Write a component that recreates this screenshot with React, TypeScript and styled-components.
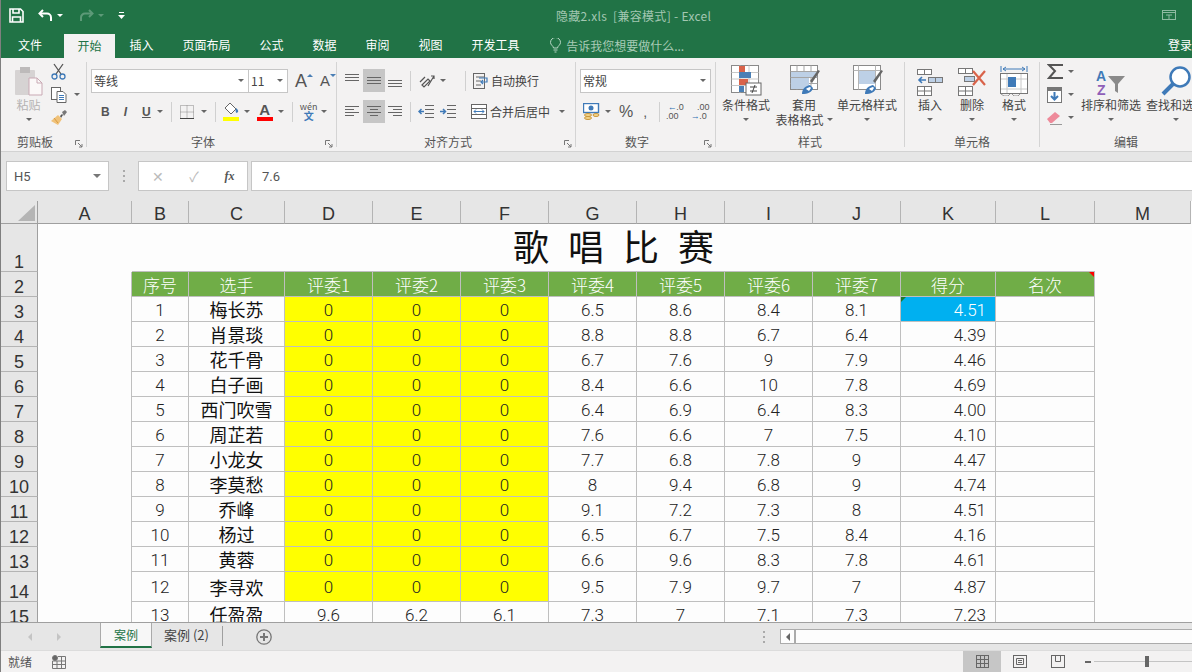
import React from 'react';
import styled, { createGlobalStyle } from 'styled-components';

const CJK = '"Noto Sans CJK SC", "Liberation Sans", sans-serif';
const NUM = 'Roboto, "Noto Sans CJK SC", sans-serif';

const GlobalStyle = createGlobalStyle`
  html, body { margin: 0; padding: 0; background: #e6e6e6; }
  body { font-family: ${CJK}; overflow: hidden; }
  * { box-sizing: border-box; }
`;

const Window = styled.div`
  width: 1192px;
  height: 672px;
  display: flex;
  flex-direction: column;
  overflow: hidden;
  border-left: 1px solid #7f7f7f;
`;

/* title bar */
const TitleBar = styled.div`
  height: 30px;
  flex: none;
  background: #217346;
  display: flex;
  align-items: center;
`;
const QuickButton = styled.div<{ $ml: number }>`
  margin-left: ${(p) => p.$ml}px;
  display: flex;
  align-items: center;
`;
const WhiteCaret = styled.span<{ $dim?: boolean }>`
  margin-left: 4px;
  border-left: 3px solid transparent;
  border-right: 3px solid transparent;
  border-top: 3px solid ${(p) => (p.$dim ? '#5d9a78' : '#fff')};
`;
const DocTitle = styled.div`
  margin-left: 431px;
  font-size: 12px;
  color: #a3c7b2;
  white-space: pre;
  letter-spacing: 0.3px;
`;
const RestoreButton = styled.div`
  margin-left: auto;
  margin-right: 16px;
  margin-top: -4px;
`;

/* tabs */
const TabBar = styled.div`
  height: 28px;
  flex: none;
  background: #217346;
  display: flex;
  align-items: stretch;
`;
const FileTab = styled.div`
  width: 63px;
  padding-left: 17px;
  font-size: 12px;
  line-height: 30px;
  color: #fff;
`;
const Tab = styled.div<{ $active?: boolean }>`
  padding: 0 ${(p) => (p.$active ? 13.5 : 14.5)}px;
  font-size: 12px;
  color: ${(p) => (p.$active ? '#217346' : '#fff')};
  background: ${(p) => (p.$active ? '#f3f2f2' : 'transparent')};
  margin-top: ${(p) => (p.$active ? 4 : 0)}px;
  line-height: ${(p) => (p.$active ? 23 : 30)}px;
`;
const TellMe = styled.div`
  margin-left: 16px;
  display: flex;
  align-items: center;
  gap: 5px;
  font-size: 12px;
  color: #a8cbb6;
  padding-top: 2px;
`;
const Login = styled.div`
  margin-left: auto;
  font-size: 12px;
  line-height: 30px;
  color: #fff;
  white-space: nowrap;
`;

/* ribbon */
const Ribbon = styled.div`
  height: 94px;
  flex: none;
  background: #f3f2f2;
  border-bottom: 1px solid #d2d2d2;
  display: flex;
  padding-top: 4px;
  overflow: hidden;
`;
const Group = styled.div<{ $w: number; $last?: boolean }>`
  width: ${(p) => p.$w}px;
  flex: none;
  height: 85px;
  display: flex;
  flex-direction: column;
  border-right: ${(p) => (p.$last ? 'none' : '1px solid #d4d4d4')};
`;
const GroupBody = styled.div<{ $pl: number }>`
  flex: 1;
  min-height: 0;
  display: flex;
  padding-left: ${(p) => p.$pl}px;
`;
const GroupTitle = styled.div<{ $tl: number }>`
  height: 14px;
  margin-bottom: -2px;
  display: flex;
  align-items: center;
  justify-content: space-between;
  font-size: 12px;
  line-height: 14px;
  color: #555;
  padding: 0 3px 0 ${(p) => p.$tl}px;
`;
const Launcher = styled.svg`
  margin-top: 3px;
`;
const StackRows = styled.div`
  display: flex;
  flex-direction: column;
  padding-top: 7px;
  gap: 8px;
`;
const ToolRow = styled.div`
  height: 23px;
  display: flex;
  align-items: center;
`;
const Item = styled.div<{ $ml?: number }>`
  margin-left: ${(p) => p.$ml ?? 0}px;
  display: flex;
  align-items: center;
  flex: none;
`;
const Caret = styled.span<{ $ml?: number }>`
  flex: none;
  margin-left: ${(p) => p.$ml ?? 0}px;
  border-left: 3px solid transparent;
  border-right: 3px solid transparent;
  border-top: 3px solid #666;
`;
const RowSep = styled.span<{ $ml: number }>`
  flex: none;
  width: 1px;
  height: 20px;
  margin-left: ${(p) => p.$ml}px;
  background: #d0d0d0;
`;
const Select = styled.div<{ $w: number; $ml?: number }>`
  width: ${(p) => p.$w}px;
  height: 24px;
  margin-left: ${(p) => p.$ml ?? 0}px;
  background: #fff;
  border: 1px solid #c6c6c6;
  display: flex;
  align-items: center;
  justify-content: space-between;
  padding: 0 4px 0 2px;
  font-size: 12px;
  color: #444;
`;
const ToggleCell = styled.div<{ $on?: boolean; $ml?: number }>`
  width: 22px;
  height: 23px;
  flex: none;
  margin-left: ${(p) => p.$ml ?? 0}px;
  background: ${(p) => (p.$on ? '#c6c6c6' : 'transparent')};
  display: flex;
  align-items: center;
  justify-content: center;
`;
const StyleLetter = styled.span<{ $i?: boolean; $u?: boolean; $ml?: number }>`
  margin-left: ${(p) => p.$ml ?? 0}px;
  font-family: "Liberation Sans", sans-serif;
  font-size: 12px;
  font-weight: 700;
  font-style: ${(p) => (p.$i ? 'italic' : 'normal')};
  text-decoration: ${(p) => (p.$u ? 'underline' : 'none')};
  color: #555;
`;
const GrowA = styled.span<{ $size: number; $ml: number }>`
  margin-left: ${(p) => p.$ml}px;
  font-family: "Liberation Sans", sans-serif;
  font-size: ${(p) => p.$size}px;
  line-height: 18px;
  color: #555;
`;
const TinyArrow = styled.span<{ $down?: boolean }>`
  align-self: flex-start;
  margin-top: 5px;
  border-left: 3px solid transparent;
  border-right: 3px solid transparent;
  ${(p) => (p.$down ? 'border-top: 3px solid #4a7fb5;' : 'border-bottom: 3px solid #4a7fb5;')}
`;
const ColorA = styled.span`
  display: flex;
  flex-direction: column;
  align-items: center;
  width: 16px;
  font-family: "Liberation Sans", sans-serif;
  font-size: 15px;
  font-weight: 700;
  line-height: 13px;
  color: #555;
`;
const ColorBar = styled.span<{ $c: string }>`
  width: 16px;
  height: 4px;
  margin-top: 1px;
  background: ${(p) => p.$c};
`;
const Wen = styled.span`
  display: flex;
  flex-direction: column;
  align-items: center;
  width: 16px;
  font-size: 9px;
  line-height: 9px;
  color: #555;
`;
const WenBlue = styled.span`
  color: #3f7ab8;
  font-size: 10px;
  line-height: 10px;
  font-weight: 700;
`;
const ActionLabel = styled.span<{ $ml: number }>`
  margin-left: ${(p) => p.$ml}px;
  font-size: 12px;
  color: #444;
  white-space: nowrap;
`;
const Percent = styled.span<{ $ml: number; $size: number }>`
  margin-left: ${(p) => p.$ml}px;
  font-family: "Liberation Sans", sans-serif;
  font-size: ${(p) => p.$size}px;
  color: #555;
`;
const DecimalIcon = styled.div<{ $ml: number }>`
  margin-left: ${(p) => p.$ml}px;
  width: 16px;
  font-family: "Liberation Sans", sans-serif;
  font-size: 9px;
  line-height: 9px;
  color: #555;
  display: grid;
  grid-template-columns: 8px 8px;
  justify-items: center;
`;
const Blue = styled.span`
  color: #2f6fb0;
  font-weight: 700;
`;
const LargeButton = styled.div<{ $w: number; $ml?: number }>`
  width: ${(p) => p.$w}px;
  margin-left: ${(p) => p.$ml ?? 0}px;
  flex: none;
  display: flex;
  flex-direction: column;
  align-items: center;
  padding-top: 4px;
  font-size: 12px;
  line-height: 15px;
  color: #444;
  white-space: nowrap;
`;
const LargeIcon = styled.div<{ $dx?: number }>`
  height: 30px;
  margin-bottom: 1px;
  margin-left: ${(p) => p.$dx ?? 0}px;
  display: flex;
  align-items: flex-end;
`;
const LargeCaretLine = styled.div`
  height: 15px;
  display: flex;
  align-items: center;
  justify-content: center;
  gap: 3px;
`;
const MutedLabel = styled.span`
  color: #b5b3b3;
`;
const SmallColumn = styled.div<{ $ml: number }>`
  margin-left: ${(p) => p.$ml}px;
  display: flex;
  flex-direction: column;
  gap: 6px;
  padding-top: 1px;
`;
const SmallRow = styled.div`
  height: 17px;
  display: flex;
  align-items: center;
`;

/* formula bar */
const FormulaBar = styled.div`
  height: 49px;
  flex: none;
  background: #e6e6e6;
  padding: 9px 0 10px 5px;
  display: flex;
`;
const NameBox = styled.div`
  width: 103px;
  background: #fff;
  border: 1px solid #c6c6c6;
  display: flex;
  align-items: center;
  justify-content: space-between;
  padding: 0 7px;
  font-family: ${NUM};
  font-size: 13px;
  color: #555;
`;
const DarkCaret = styled.span`
  border-left: 4px solid transparent;
  border-right: 4px solid transparent;
  border-top: 4px solid #777;
`;
const GripDots = styled.span`
  flex: none;
  width: 2px;
  height: 12px;
  background: repeating-linear-gradient(to bottom, #aaa 0 2px, transparent 2px 5px);
`;
const BarGrip = styled.div`
  width: 29px;
  display: flex;
  align-items: center;
  justify-content: center;
`;
const FormulaButtons = styled.div`
  width: 110px;
  background: #fff;
  border: 1px solid #c6c6c6;
  display: grid;
  grid-template-columns: 37px 36px 35px;
  align-items: center;
  justify-items: center;
  font-size: 14px;
  color: #bbb;
`;
const FxLabel = styled.span`
  font-family: "Liberation Serif", serif;
  font-style: italic;
  font-weight: 700;
  font-size: 12px;
  color: #555;
`;
const FormulaInput = styled.div`
  flex: 1;
  margin-left: 3px;
  background: #fff;
  border: 1px solid #c6c6c6;
  border-right: none;
  display: flex;
  align-items: center;
  padding-left: 10px;
  font-family: ${NUM};
  font-size: 13px;
  color: #555;
`;

/* sheet */
const SheetArea = styled.div`
  flex: 1;
  min-height: 0;
  overflow: hidden;
  background: #fdfdfd;
`;
const SheetGrid = styled.div`
  display: grid;
  grid-template-columns: 37px 94px 57px 96px 88px 88px 88px 88px 88px 88px 88px 95px 99px 96px;
  grid-template-rows: 23px 48px repeat(12, 25px) 30px 25px;
  font-family: ${NUM};
  color: #222;
`;
const Corner = styled.div`
  background: #e6e6e6;
  border-right: 1px solid #9f9f9f;
  border-bottom: 1px solid #9f9f9f;
  display: flex;
  align-items: flex-end;
  justify-content: flex-end;
  padding: 0 2px 2px 0;
`;
const ColHead = styled.div`
  background: #e6e6e6;
  border-right: 1px solid #b4b4b4;
  border-bottom: 1px solid #9f9f9f;
  font-size: 18px;
  font-family: "Liberation Sans", sans-serif;
  line-height: 26px;
  text-align: center;
  color: #333;
`;
const RowHead = styled.div`
  background: #e6e6e6;
  border-right: 1px solid #9f9f9f;
  border-bottom: 1px solid #b4b4b4;
  font-size: 18px;
  font-family: "Liberation Sans", sans-serif;
  display: flex;
  align-items: flex-end;
  justify-content: center;
  line-height: 18px;
  color: #333;
`;
const Blank = styled.div<{ $edge?: boolean }>`
  border-right: ${(p) => (p.$edge ? '1px solid #bfbfbf' : 'none')};
`;
const TitleCell = styled.div`
  grid-column: span 11;
  border-bottom: 1px solid #bfbfbf;
  font-family: ${CJK};
  font-size: 36px;
  line-height: 42px;
  text-align: center;
  word-spacing: 11px;
  color: #111;
`;
const Cell = styled.div<{ $head?: boolean; $fill?: string; $right?: boolean }>`
  position: relative;
  background: ${(p) => (p.$head ? '#70ad47' : p.$fill ?? 'transparent')};
  color: ${(p) => (p.$head || p.$fill === '#00b0f0' ? '#fff' : '#222')};
  border-right: 1px solid #bfbfbf;
  border-bottom: 1px solid #bfbfbf;
  display: flex;
  align-items: center;
  justify-content: ${(p) => (p.$right ? 'flex-end' : 'center')};
  padding-right: ${(p) => (p.$right ? 9 : 0)}px;
  padding-top: ${(p) => (p.$head ? 0 : 1)}px;
  font-size: 17px;
  font-family: ${(p) => (p.$head ? CJK : NUM)};
  font-weight: 300;
  white-space: nowrap;
`;
const NameText = styled.span`
  margin-top: -1px;
  font-family: ${CJK};
  font-size: 18px;
  font-weight: 400;
  color: #111;
`;
const CornerMark = styled.span<{ $c: string; $side: 'left' | 'right' }>`
  position: absolute;
  top: 0;
  ${(p) => p.$side}: 0;
  width: 0;
  height: 0;
  border-top: 5px solid ${(p) => p.$c};
  ${(p) => (p.$side === 'left' ? 'border-right: 5px solid transparent;' : 'border-left: 5px solid transparent;')}
`;

/* sheet tabs */
const SheetTabs = styled.div`
  height: 28px;
  flex: none;
  background: #e6e6e6;
  border-top: 1px solid #9f9f9f;
  display: flex;
`;
const NavArrow = styled.span<{ $ml: number; $right?: boolean }>`
  align-self: center;
  margin-left: ${(p) => p.$ml}px;
  border-top: 4px solid transparent;
  border-bottom: 4px solid transparent;
  ${(p) => (p.$right ? 'border-left: 4px solid #c4c4c4;' : 'border-right: 4px solid #c4c4c4;')}
`;
const ActiveSheet = styled.div`
  margin-left: 39px;
  width: 52px;
  height: 25px;
  background: #f7f7f7;
  border-left: 1px solid #aaa;
  border-right: 1px solid #aaa;
  border-bottom: 2px solid #217346;
  color: #217346;
  font-size: 12px;
  line-height: 23px;
  text-align: center;
`;
const OtherSheet = styled.div`
  margin-left: 12px;
  width: 46px;
  font-size: 13px;
  line-height: 24px;
  color: #444;
  white-space: nowrap;
`;
const TabSep = styled.span`
  margin: 3px 0 3px 12px;
  width: 1px;
  height: 20px;
  background: #9f9f9f;
`;
const AddSheet = styled.div`
  margin-left: 33px;
  align-self: center;
  display: flex;
`;
const ScrollGrip = styled.div`
  margin-left: 484px;
  width: 16px;
  display: flex;
  align-items: center;
  justify-content: center;
`;
const ScrollBar = styled.div`
  margin-left: 8px;
  margin-top: 6px;
  flex: 1;
  height: 15px;
  background: #fdfdfd;
  border: 1px solid #ababab;
  border-right: none;
  display: flex;
`;
const ScrollButton = styled.div`
  width: 15px;
  border-right: 2px solid #ababab;
  display: flex;
  align-items: center;
  justify-content: center;
`;
const ScrollTri = styled.span`
  border-top: 4px solid transparent;
  border-bottom: 4px solid transparent;
  border-right: 4px solid #666;
`;

/* status bar */
const StatusBar = styled.div`
  height: 22px;
  flex: none;
  background: #f3f2f2;
  display: flex;
  align-items: center;
  border-top: 1px solid #dcdcdc;
  font-size: 12px;
  color: #555;
`;
const StatusText = styled.span`
  margin-left: 7px;
  margin-top: -1px;
`;
const ViewButton = styled.div<{ $on?: boolean; $ml: number }>`
  width: 38px;
  height: 21px;
  margin-left: ${(p) => p.$ml}px;
  background: ${(p) => (p.$on ? '#c6c6c6' : 'transparent')};
  display: flex;
  align-items: center;
  justify-content: center;
`;
const ZoomMinus = styled.span`
  margin-left: 8px;
  width: 6px;
  height: 2px;
  background: #666;
`;
const ZoomTrack = styled.div`
  margin-left: 3px;
  flex: 1;
  height: 1px;
  background: #c4c4c4;
  display: flex;
  align-items: center;
  padding-left: 51px;
`;
const ZoomKnob = styled.span`
  flex: none;
  width: 4px;
  height: 11px;
  background: #666;
`;

const LauncherIcon = () => (
  <Launcher width="8" height="8" viewBox="0 0 8 8" fill="none" stroke="#777">
    <path d="M.5 5V.5H5" />
    <path d="M3 3l4 4M7 4v3H4" />
  </Launcher>
);

const Title = ({ children, tl }: { children: React.ReactNode; tl: number }) => (
  <GroupTitle $tl={tl}>
    <span>{children}</span>
    <LauncherIcon />
  </GroupTitle>
);

const PlainTitle = ({ children, tl }: { children: React.ReactNode; tl: number }) => (
  <GroupTitle $tl={tl}>
    <span>{children}</span>
  </GroupTitle>
);

const SaveIcon = () => (
  <svg width="15" height="15" viewBox="0 0 15 15" fill="none" stroke="#fff" strokeWidth="1.6">
    <path d="M1 1h10.5L14 3.5V14H1z" />
    <path d="M4 1v4h6V1M3.5 14V9h8v5" />
  </svg>
);

const UndoIcon = () => (
  <svg width="15" height="13" viewBox="0 0 15 13" fill="none" stroke="#fff" strokeWidth="2">
    <path d="M5 1L1.5 4.5 5 8" />
    <path d="M2 4.5h7a4 4 0 0 1 4 4V12" />
  </svg>
);

const RedoIcon = () => (
  <svg width="15" height="13" viewBox="0 0 15 13" fill="none" stroke="#5d9a78" strokeWidth="2">
    <path d="M10 1l3.500 3.500L10 8" />
    <path d="M13 4.500H6a4 4 0 0 0-4 4V12" />
  </svg>
);

const CustomizeIcon = () => (
  <svg width="7" height="7" viewBox="0 0 7 7" fill="#fff">
    <rect x="1" y="0" width="5" height="1" />
    <path d="M0 3h7L3.5 7z" />
  </svg>
);

const RestoreIcon = () => (
  <svg width="14" height="10" viewBox="0 0 14 10" fill="none" stroke="#8fbba2">
    <rect x=".5" y=".5" width="13" height="9" />
    <path d="M.5 2.5h13M4 5h6M7 5v4" />
  </svg>
);

const BulbIcon = () => (
  <svg width="11" height="15" viewBox="0 0 11 15" fill="none" stroke="#b9d6c5">
    <path d="M3.5 10c0-2-3-3-3-5.5a5 5 0 0 1 10 0C10.500 7 7.500 8 7.500 10z" />
    <path d="M3.500 12h4M4.500 14h2" />
  </svg>
);

const PasteIcon = () => (
  <svg width="29" height="30" viewBox="0 0 29 30">
    <rect x="1" y="4" width="20" height="25" rx="1" fill="#d6d3d3" />
    <rect x="6" y="1" width="10" height="6" fill="#bdbaba" />
    <path d="M15 12h8l5 5v12H15z" fill="#fbf8f8" stroke="#c9a9b4" />
    <path d="M23 12v5h5" fill="none" stroke="#c9a9b4" />
  </svg>
);

const ScissorsIcon = () => (
  <svg width="15" height="17" viewBox="0 0 15 17" fill="none" stroke="#555" strokeWidth="1.3">
    <path d="M3 1l7 10M12 1L5 11" />
    <circle cx="3.500" cy="13.500" r="2.500" stroke="#3f7ab8" />
    <circle cx="11.500" cy="13.500" r="2.500" stroke="#3f7ab8" />
  </svg>
);

const CopyIcon = () => (
  <svg width="16" height="16" viewBox="0 0 16 16" fill="#fff" stroke="#666">
    <rect x=".5" y=".5" width="9" height="12" />
    <path d="M6 4.500h6l3 3v8H6z" />
    <path d="M8 8.500h5M8 10.500h5M8 12.500h5" stroke="#3f7ab8" />
  </svg>
);

const BrushIcon = () => (
  <svg width="16" height="16" viewBox="0 0 16 16">
    <path d="M9 6l2-2 1 1-2 3z" fill="#555" />
    <path d="M11 2l3-2 2 2-3 4z" fill="#777" />
    <path d="M7 5l4 4-4 6-7-4z" fill="#f0c27a" />
    <path d="M3 8l4 5" stroke="#d89a3e" fill="none" />
  </svg>
);

const BorderIcon = () => (
  <svg width="14" height="14" viewBox="0 0 14 14" fill="none" stroke="#888" strokeDasharray="1 1">
    <rect x=".5" y=".5" width="13" height="13" />
    <path d="M7 .5v13M.5 7h13" />
    <path d="M0 13.500h14" stroke="#444" strokeDasharray="none" />
  </svg>
);

const FillIcon = () => (
  <svg width="16" height="19" viewBox="0 0 16 19">
    <path d="M7 1l6 6-5 5-6-6z" fill="#fff" stroke="#666" />
    <path d="M13 6c2 2 3 3 1.500 4.500S12 9 13 6z" fill="#3f7ab8" />
    <rect y="15" width="16" height="4" fill="#ffff00" />
  </svg>
);

const AlignIcon = ({ rows }: { rows: [number, number, number][] }) => (
  <svg width="15" height="15" viewBox="0 0 15 15" stroke="#666">
    {rows.map(([y, a, b], i) => (
      <path key={i} d={`M${a} ${y}.5H${b}`} />
    ))}
  </svg>
);

const OrientationIcon = () => (
  <svg width="17" height="15" viewBox="0 0 17 15" fill="none" stroke="#555" strokeWidth="1.2">
    <path d="M1 9l5-5M3 12l6-6 2 2-6 6z" />
    <path d="M9 13L15 3M12 3h3v3" />
  </svg>
);

const IndentIcon = ({ flip }: { flip?: boolean }) => (
  <svg width="16" height="14" viewBox="0 0 16 14" fill="none" stroke="#666">
    <path d="M7 .5h9M7 4.500h9M7 8.500h9M7 12.500h9" />
    {flip ? (
      <path d="M0 6.500h5M3 4l2.500 2.500L3 9" stroke="#3f7ab8" strokeWidth="1.500" />
    ) : (
      <path d="M6 6.500H1M3.500 4L1 6.500 3.500 9" stroke="#3f7ab8" strokeWidth="1.500" />
    )}
  </svg>
);

const WrapIcon = () => (
  <svg width="16" height="16" viewBox="0 0 16 16" fill="none" stroke="#666">
    <rect x=".5" y=".5" width="11" height="15" />
    <path d="M3 4h8M3 8h5M3 12h5" />
    <path d="M6 5h8v4H8M10 7L8 9l2 2" stroke="#3f7ab8" strokeWidth="1.200" />
  </svg>
);

const MergeIcon = () => (
  <svg width="16" height="15" viewBox="0 0 16 15" fill="#fff" stroke="#666">
    <rect x=".5" y=".5" width="15" height="14" />
    <path d="M.5 4.500h15M.5 10.500h15" />
    <path d="M3 7.500h10M5 5.500l-2 2 2 2M11 5.500l2 2-2 2" stroke="#3f7ab8" fill="none" />
  </svg>
);

const CurrencyIcon = () => (
  <svg width="17" height="18" viewBox="0 0 17 18">
    <rect x=".5" y=".5" width="15" height="9" fill="#fff" stroke="#3f7ab8" strokeWidth="1.400" />
    <circle cx="8" cy="5" r="2.500" fill="#3f7ab8" />
    <ellipse cx="5" cy="12" rx="3.500" ry="1.500" fill="#f2d58c" stroke="#c9963c" />
    <ellipse cx="5" cy="15" rx="3.500" ry="1.500" fill="#f2d58c" stroke="#c9963c" />
    <ellipse cx="13" cy="12" rx="3" ry="1.500" fill="#f2d58c" stroke="#c9963c" />
  </svg>
);

const CondFormatIcon = () => (
  <svg width="31" height="31" viewBox="0 0 31 31">
    <rect x=".5" y=".5" width="27" height="27" fill="#fff" stroke="#8a8a8a" />
    <path d="M9 .5v27M18 .5v27M.5 7.500h27M.5 14h27M.5 20.500h27" stroke="#c8c8c8" />
    <rect x="8" y="1" width="6" height="6" fill="#d9634a" />
    <rect x="8" y="7" width="12" height="6" fill="#4a7fb5" />
    <rect x="8" y="14" width="9" height="6" fill="#d9634a" />
    <rect x="8" y="21" width="5" height="6" fill="#4a7fb5" />
    <rect x="15" y="18" width="15" height="12" fill="#fff" stroke="#666" />
    <path d="M19 22h7M19 26h7M24 20l-3 8" stroke="#444" fill="none" />
  </svg>
);

const BrushHandle = ({ x }: { x: number }) => (
  <g transform={`translate(${x} 0)`}>
    <path d="M11 16l2 2 8-12-2-1z" fill="#666" />
    <path d="M3 29c0-5 3-8 8-9l3 3c-1 4-5 6-11 6z" fill="#3f7ab8" />
    <path d="M7 24c1-1 3-2 4-2l1 1-2 3z" fill="#fff" />
  </g>
);

const TableFormatIcon = () => (
  <svg width="33" height="31" viewBox="0 0 33 31">
    <rect x=".5" y=".5" width="27" height="24" fill="#fff" stroke="#8a8a8a" />
    <path d="M.5 6.500h27M.5 12.500h27M.5 18.500h27M7 .5v24M14 .5v24M21 .5v24" stroke="#a5a5a5" />
    <rect x="1" y="7" width="26" height="5" fill="#bdd0e6" />
    <rect x="1" y="13" width="18" height="11" fill="#bdd0e6" />
    <BrushHandle x={9} />
  </svg>
);

const CellStyleIcon = () => (
  <svg width="33" height="31" viewBox="0 0 33 31">
    <rect x=".5" y=".5" width="27" height="24" fill="#fff" stroke="#8a8a8a" />
    <path d="M.5 5.500h27M5.500 .5v24M22.500 .5v24" stroke="#b5b5b5" />
    <rect x="6" y="6" width="16" height="13" fill="#bdd0e6" />
    <BrushHandle x={9} />
  </svg>
);

const GridPart = ({ x, y, w }: { x: number; y: number; w: number }) => (
  <g fill="#fff" stroke="#777">
    <rect x={x + 0.5} y={y + 0.5} width={w} height="5" />
    <path d={`M${x + w / 2 + 0.5} ${y}v6`} />
  </g>
);

const InsertIcon = () => (
  <svg width="28" height="27" viewBox="0 0 28 27">
    <GridPart x={1} y={0} w={14} />
    <rect x="1.500" y="17.500" width="14" height="9" fill="#fff" stroke="#777" />
    <path d="M8.500 17v10M1 22h15" stroke="#777" />
    <rect x="12.500" y="8.500" width="14" height="5" fill="#bdd0e6" stroke="#777" />
    <path d="M19.500 8v6" stroke="#777" />
    <path d="M10 11H3M6 8l-3 3 3 3" stroke="#3f7ab8" strokeWidth="1.600" fill="none" />
  </svg>
);

const DeleteIcon = () => (
  <svg width="30" height="28" viewBox="0 0 30 28">
    <GridPart x={1} y={0} w={14} />
    <rect x="1.500" y="18.500" width="14" height="9" fill="#fff" stroke="#777" />
    <path d="M8.500 18v10M1 23h15" stroke="#777" />
    <rect x="7.500" y="8.500" width="10" height="5" fill="#bdd0e6" stroke="#777" />
    <path d="M16 3l12 14M28 3L16 17" stroke="#d9634a" strokeWidth="2.200" />
  </svg>
);

const FormatIcon = () => (
  <svg width="28" height="30" viewBox="0 0 28 30">
    <path d="M1 0v6M27 0v6M3 3h22M6 1L3 3l3 2M22 1l3 2-3 2" stroke="#3f7ab8" fill="none" />
    <rect x=".5" y="7.500" width="27" height="20" fill="#fff" stroke="#777" />
    <path d="M7 8v19M21 8v19M1 13h26M1 23h26" stroke="#c8c8c8" />
    <rect x="8" y="11" width="8" height="10" fill="#3f7ab8" />
    <path d="M1 28l3 2h4l2-2M12 28l2 2h4l2-2" fill="none" stroke="#999" />
  </svg>
);

const SumIcon = () => (
  <svg width="16" height="15" viewBox="0 0 16 15" fill="none" stroke="#555" strokeWidth="2">
    <path d="M15 2V1H2l6 6-6 7h13v-1" />
  </svg>
);

const FillDownIcon = () => (
  <svg width="15" height="16" viewBox="0 0 15 16">
    <rect x=".5" y=".5" width="14" height="15" fill="#fff" stroke="#777" />
    <rect x="1" y="1" width="13" height="3" fill="#777" />
    <path d="M7.500 5v7M4 9l3.500 3.500L11 9" stroke="#3f7ab8" strokeWidth="2" fill="none" />
  </svg>
);

const EraserIcon = () => (
  <svg width="16" height="14" viewBox="0 0 16 14">
    <path d="M0 8l8-7 5 4-8 7H3z" fill="#ee8a9a" />
    <path d="M3 13.500h12" stroke="#999" />
  </svg>
);

const SortIcon = () => (
  <svg width="30" height="28" viewBox="0 0 30 28">
    <text x="0" y="13" fontFamily="Liberation Sans" fontSize="14" fontWeight="700" fill="#3f7ab8">A</text>
    <text x="1" y="27" fontFamily="Liberation Sans" fontSize="14" fontWeight="700" fill="#8f5fb8">Z</text>
    <path d="M12 8h17l-7 8v9l-3-2v-7z" fill="#8a8a8a" />
  </svg>
);

const SearchIcon = () => (
  <svg width="31" height="30" viewBox="0 0 31 30">
    <circle cx="19" cy="11" r="9.500" fill="#fff" stroke="#3f7ab8" strokeWidth="2.500" />
    <path d="M12 18L2 28" stroke="#3f7ab8" strokeWidth="4" />
  </svg>
);

const CornerTriangle = () => (
  <svg width="17" height="16" viewBox="0 0 17 16">
    <path d="M17 0v16H0z" fill="#b5b5b5" />
  </svg>
);

const PlusCircle = () => (
  <svg width="16" height="16" viewBox="0 0 16 16" fill="none" stroke="#777">
    <circle cx="8" cy="8" r="7.200" strokeWidth="1.300" />
    <path d="M4 8h8M8 4v8" strokeWidth="2" />
  </svg>
);

const MacroIcon = () => (
  <svg width="14" height="14" viewBox="0 0 14 14" fill="none" stroke="#777">
    <circle cx="3" cy="3" r="2.500" fill="#666" />
    <path d="M6 1.500h7.500v12H.5V6M.5 6h13M.5 9.500h13M5 6v8M9.500 1.500v12" />
  </svg>
);

const NormalViewIcon = () => (
  <svg width="13" height="13" viewBox="0 0 13 13" fill="none" stroke="#666">
    <rect x=".5" y=".5" width="12" height="12" />
    <path d="M4.500 .5v12M8.500 .5v12M.5 4.500h12M.5 8.500h12" />
  </svg>
);

const PageViewIcon = () => (
  <svg width="14" height="13" viewBox="0 0 14 13" fill="none" stroke="#666">
    <rect x=".5" y=".5" width="13" height="12" />
    <path d="M3.500 3.500h7v6h-7zM5 5.500h4M5 7.500h4" />
  </svg>
);

const BreakViewIcon = () => (
  <svg width="14" height="13" viewBox="0 0 14 13" fill="none" stroke="#666">
    <rect x=".5" y=".5" width="13" height="12" />
    <path d="M4.500 .5v6h5v-6" />
  </svg>
);

const TOP: [number, number, number][] = [[1, 0, 14], [4, 0, 14], [7, 0, 14]];
const MID: [number, number, number][] = [[4, 0, 14], [7, 0, 14], [10, 0, 14]];
const BOT: [number, number, number][] = [[7, 0, 14], [10, 0, 14], [13, 0, 14]];
const LEFT: [number, number, number][] = [[2, 0, 14], [5, 0, 9], [8, 0, 14], [11, 0, 9]];
const CENTER: [number, number, number][] = [[2, 0, 14], [5, 3, 11], [8, 0, 14], [11, 3, 11]];
const RIGHT: [number, number, number][] = [[2, 0, 14], [5, 5, 14], [8, 0, 14], [11, 5, 14]];

const COLUMNS = ['A', 'B', 'C', 'D', 'E', 'F', 'G', 'H', 'I', 'J', 'K', 'L', 'M'];
const HEADERS = ['序号', '选手', '评委1', '评委2', '评委3', '评委4', '评委5', '评委6', '评委7', '得分', '名次'];
const ROWS: (string | number)[][] = [
  [1, '梅长苏', 0, 0, 0, 6.5, 8.6, 8.4, 8.1, '4.51'],
  [2, '肖景琰', 0, 0, 0, 8.8, 8.8, 6.7, 6.4, '4.39'],
  [3, '花千骨', 0, 0, 0, 6.7, 7.6, 9, 7.9, '4.46'],
  [4, '白子画', 0, 0, 0, 8.4, 6.6, 10, 7.8, '4.69'],
  [5, '西门吹雪', 0, 0, 0, 6.4, 6.9, 6.4, 8.3, '4.00'],
  [6, '周芷若', 0, 0, 0, 7.6, 6.6, 7, 7.5, '4.10'],
  [7, '小龙女', 0, 0, 0, 7.7, 6.8, 7.8, 9, '4.47'],
  [8, '李莫愁', 0, 0, 0, 8, 9.4, 6.8, 9, '4.74'],
  [9, '乔峰', 0, 0, 0, 9.1, 7.2, 7.3, 8, '4.51'],
  [10, '杨过', 0, 0, 0, 6.5, 6.7, 7.5, 8.4, '4.16'],
  [11, '黄蓉', 0, 0, 0, 6.6, 9.6, 8.3, 7.8, '4.61'],
  [12, '李寻欢', 0, 0, 0, 9.5, 7.9, 9.7, 7, '4.87'],
  [13, '任盈盈', 9.6, 6.2, 6.1, 7.3, 7, 7.1, 7.3, '7.23'],
];

function Sheet() {
  return (
    <SheetGrid>
      <Corner>
        <CornerTriangle />
      </Corner>
      {COLUMNS.map((c) => (
        <ColHead key={c}>{c}</ColHead>
      ))}

      <RowHead>1</RowHead>
      <Blank />
      <TitleCell>歌 唱 比 赛</TitleCell>
      <Blank />

      <RowHead>2</RowHead>
      <Blank $edge />
      {HEADERS.map((h, i) => (
        <Cell key={h} $head>
          {h}
          {i === HEADERS.length - 1 && <CornerMark $c="#ff0000" $side="right" />}
        </Cell>
      ))}
      <Blank />

      {ROWS.map((row, r) => (
        <React.Fragment key={r}>
          <RowHead>{r + 3}</RowHead>
          <Blank $edge />
          {row.map((v, i) => {
            const isJudgeZero = i >= 2 && i <= 4 && v === 0;
            const isScore = i === 9;
            const isBlue = isScore && r === 0;
            return (
              <Cell key={i} $right={isScore} $fill={isBlue ? '#00b0f0' : isJudgeZero ? '#ffff00' : undefined}>
                {i === 1 ? <NameText>{v}</NameText> : v}
                {isBlue && <CornerMark $c="#1b7a2f" $side="left" />}
              </Cell>
            );
          })}
          <Cell />
          <Blank />
        </React.Fragment>
      ))}
    </SheetGrid>
  );
}

export default function App() {
  return (
    <Window>
      <GlobalStyle />
      <TitleBar>
        <QuickButton $ml={8}>
          <SaveIcon />
        </QuickButton>
        <QuickButton $ml={14}>
          <UndoIcon />
          <WhiteCaret />
        </QuickButton>
        <QuickButton $ml={16}>
          <RedoIcon />
          <WhiteCaret $dim />
        </QuickButton>
        <QuickButton $ml={14}>
          <CustomizeIcon />
        </QuickButton>
        <DocTitle>隐藏2.xls  [兼容模式] - Excel</DocTitle>
        <RestoreButton>
          <RestoreIcon />
        </RestoreButton>
      </TitleBar>

      <TabBar>
        <FileTab>文件</FileTab>
        <Tab $active>开始</Tab>
        <Tab>插入</Tab>
        <Tab>页面布局</Tab>
        <Tab>公式</Tab>
        <Tab>数据</Tab>
        <Tab>审阅</Tab>
        <Tab>视图</Tab>
        <Tab>开发工具</Tab>
        <TellMe>
          <BulbIcon />
          告诉我您想要做什么...
        </TellMe>
        <Login>登录</Login>
      </TabBar>

      <Ribbon>
        <Group $w={86}>
          <GroupBody $pl={13}>
            <LargeButton $w={29}>
              <LargeIcon>
                <PasteIcon />
              </LargeIcon>
              <MutedLabel>粘贴</MutedLabel>
              <LargeCaretLine>
                <Caret />
              </LargeCaretLine>
            </LargeButton>
            <SmallColumn $ml={8}>
              <SmallRow>
                <ScissorsIcon />
              </SmallRow>
              <SmallRow>
                <CopyIcon />
                <Caret $ml={7} />
              </SmallRow>
              <SmallRow>
                <BrushIcon />
              </SmallRow>
            </SmallColumn>
          </GroupBody>
          <Title tl={16}>剪贴板</Title>
        </Group>

        <Group $w={250}>
          <GroupBody $pl={4}>
            <StackRows>
              <ToolRow>
                <Select $w={158}>
                  等线
                  <Caret />
                </Select>
                <Select $w={40} $ml={-1}>
                  11
                  <Caret />
                </Select>
                <GrowA $size={18} $ml={7}>A</GrowA>
                <TinyArrow />
                <GrowA $size={15} $ml={7}>A</GrowA>
                <TinyArrow $down />
              </ToolRow>
              <ToolRow>
                <StyleLetter $ml={10}>B</StyleLetter>
                <StyleLetter $ml={14} $i>I</StyleLetter>
                <StyleLetter $ml={15} $u>U</StyleLetter>
                <Caret $ml={6} />
                <RowSep $ml={8} />
                <Item $ml={8}>
                  <BorderIcon />
                </Item>
                <Caret $ml={7} />
                <RowSep $ml={8} />
                <Item $ml={7}>
                  <FillIcon />
                </Item>
                <Caret $ml={5} />
                <Item $ml={7}>
                  <ColorA>
                    A
                    <ColorBar $c="#ff0000" />
                  </ColorA>
                </Item>
                <Caret $ml={5} />
                <RowSep $ml={8} />
                <Item $ml={8}>
                  <Wen>
                    wén
                    <WenBlue>文</WenBlue>
                  </Wen>
                </Item>
                <Caret $ml={4} />
              </ToolRow>
            </StackRows>
          </GroupBody>
          <Title tl={104}>字体</Title>
        </Group>

        <Group $w={239}>
          <GroupBody $pl={8}>
            <StackRows>
              <ToolRow>
                <AlignIcon rows={TOP} />
                <ToggleCell $on $ml={3}>
                  <AlignIcon rows={MID} />
                </ToggleCell>
                <Item $ml={3}>
                  <AlignIcon rows={BOT} />
                </Item>
                <RowSep $ml={7} />
                <Item $ml={8}>
                  <OrientationIcon />
                </Item>
                <Caret $ml={4} />
                <RowSep $ml={19} />
                <Item $ml={7}>
                  <WrapIcon />
                </Item>
                <ActionLabel $ml={2}>自动换行</ActionLabel>
              </ToolRow>
              <ToolRow>
                <AlignIcon rows={LEFT} />
                <ToggleCell $on $ml={3}>
                  <AlignIcon rows={CENTER} />
                </ToggleCell>
                <Item $ml={3}>
                  <AlignIcon rows={RIGHT} />
                </Item>
                <RowSep $ml={7} />
                <Item $ml={7}>
                  <IndentIcon />
                </Item>
                <Item $ml={6}>
                  <IndentIcon flip />
                </Item>
                <Item $ml={15}>
                  <MergeIcon />
                </Item>
                <ActionLabel $ml={3}>合并后居中</ActionLabel>
                <Caret $ml={9} />
              </ToolRow>
            </StackRows>
          </GroupBody>
          <Title tl={87}>对齐方式</Title>
        </Group>

        <Group $w={140}>
          <GroupBody $pl={4}>
            <StackRows>
              <ToolRow>
                <Select $w={131}>
                  常规
                  <Caret />
                </Select>
              </ToolRow>
              <ToolRow>
                <Item $ml={3}>
                  <CurrencyIcon />
                </Item>
                <Caret $ml={5} />
                <Percent $ml={8} $size={16}>%</Percent>
                <Percent $ml={10} $size={14}>,</Percent>
                <RowSep $ml={12} />
                <DecimalIcon $ml={8}>
                  <Blue>←</Blue>
                  <span>.0</span>
                  <span>.00</span>
                  <span />
                </DecimalIcon>
                <DecimalIcon $ml={7}>
                  <span />
                  <span>.00</span>
                  <Blue>→</Blue>
                  <span>.0</span>
                </DecimalIcon>
              </ToolRow>
            </StackRows>
          </GroupBody>
          <Title tl={49}>数字</Title>
        </Group>

        <Group $w={189}>
          <GroupBody $pl={6}>
            <LargeButton $w={48}>
              <LargeIcon>
                <CondFormatIcon />
              </LargeIcon>
              条件格式
              <LargeCaretLine>
                <Caret />
              </LargeCaretLine>
            </LargeButton>
            <LargeButton $w={60} $ml={4}>
              <LargeIcon $dx={4}>
                <TableFormatIcon />
              </LargeIcon>
              套用
              <LargeCaretLine>
                表格格式
                <Caret />
              </LargeCaretLine>
            </LargeButton>
            <LargeButton $w={64} $ml={1}>
              <LargeIcon $dx={4}>
                <CellStyleIcon />
              </LargeIcon>
              单元格样式
              <LargeCaretLine>
                <Caret />
              </LargeCaretLine>
            </LargeButton>
          </GroupBody>
          <PlainTitle tl={82}>样式</PlainTitle>
        </Group>

        <Group $w={135}>
          <GroupBody $pl={4}>
            <LargeButton $w={42}>
              <LargeIcon>
                <InsertIcon />
              </LargeIcon>
              插入
              <LargeCaretLine>
                <Caret />
              </LargeCaretLine>
            </LargeButton>
            <LargeButton $w={42}>
              <LargeIcon>
                <DeleteIcon />
              </LargeIcon>
              删除
              <LargeCaretLine>
                <Caret />
              </LargeCaretLine>
            </LargeButton>
            <LargeButton $w={42}>
              <LargeIcon>
                <FormatIcon />
              </LargeIcon>
              格式
              <LargeCaretLine>
                <Caret />
              </LargeCaretLine>
            </LargeButton>
          </GroupBody>
          <PlainTitle tl={49}>单元格</PlainTitle>
        </Group>

        <Group $w={152} $last>
          <GroupBody $pl={7}>
            <SmallColumn $ml={0}>
              <SmallRow>
                <SumIcon />
                <Caret $ml={5} />
              </SmallRow>
              <SmallRow>
                <FillDownIcon />
                <Caret $ml={6} />
              </SmallRow>
              <SmallRow>
                <EraserIcon />
                <Caret $ml={5} />
              </SmallRow>
            </SmallColumn>
            <LargeButton $w={60} $ml={7}>
              <LargeIcon>
                <SortIcon />
              </LargeIcon>
              排序和筛选
              <LargeCaretLine>
                <Caret />
              </LargeCaretLine>
            </LargeButton>
            <LargeButton $w={60} $ml={5}>
              <LargeIcon>
                <SearchIcon />
              </LargeIcon>
              查找和选择
              <LargeCaretLine>
                <Caret />
              </LargeCaretLine>
            </LargeButton>
          </GroupBody>
          <PlainTitle tl={74}>编辑</PlainTitle>
        </Group>
      </Ribbon>

      <FormulaBar>
        <NameBox>
          H5
          <DarkCaret />
        </NameBox>
        <BarGrip>
          <GripDots />
        </BarGrip>
        <FormulaButtons>
          <span>✕</span>
          <span>✓</span>
          <FxLabel>fx</FxLabel>
        </FormulaButtons>
        <FormulaInput>7.6</FormulaInput>
      </FormulaBar>

      <SheetArea>
        <Sheet />
      </SheetArea>

      <SheetTabs>
        <NavArrow $ml={27} />
        <NavArrow $ml={25} $right />
        <ActiveSheet>案例</ActiveSheet>
        <OtherSheet>案例 (2)</OtherSheet>
        <TabSep />
        <AddSheet>
          <PlusCircle />
        </AddSheet>
        <ScrollGrip>
          <GripDots />
        </ScrollGrip>
        <ScrollBar>
          <ScrollButton>
            <ScrollTri />
          </ScrollButton>
        </ScrollBar>
      </SheetTabs>

      <StatusBar>
        <StatusText>就绪</StatusText>
        <Item $ml={20}>
          <MacroIcon />
        </Item>
        <ViewButton $on $ml={897}>
          <NormalViewIcon />
        </ViewButton>
        <ViewButton $ml={0}>
          <PageViewIcon />
        </ViewButton>
        <ViewButton $ml={0}>
          <BreakViewIcon />
        </ViewButton>
        <ZoomMinus />
        <ZoomTrack>
          <ZoomKnob />
        </ZoomTrack>
      </StatusBar>
    </Window>
  );
}
